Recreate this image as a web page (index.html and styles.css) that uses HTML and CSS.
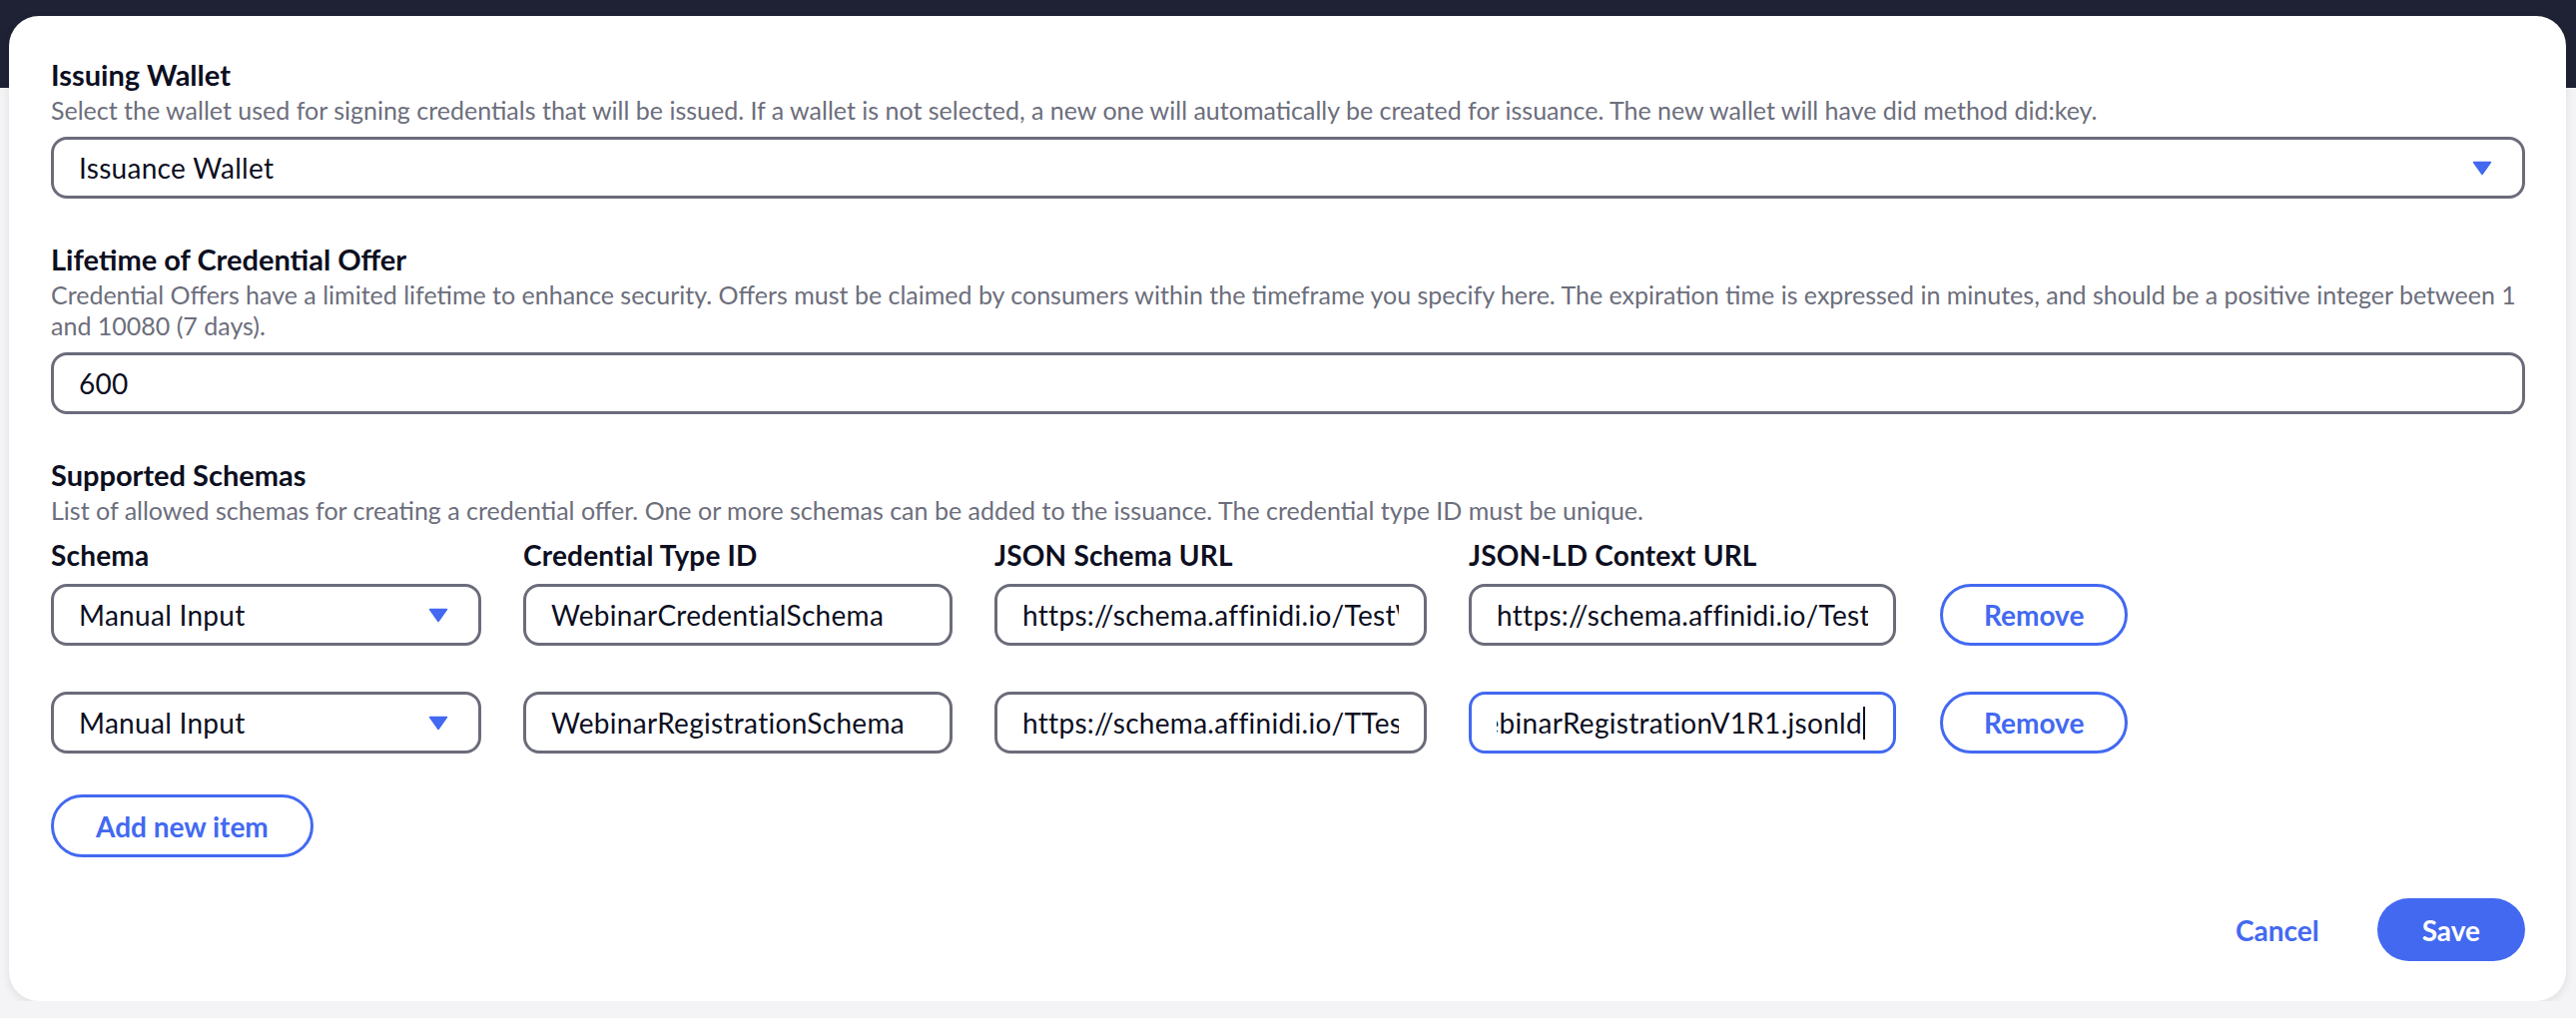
FILE: index.html
```html
<!DOCTYPE html>
<html lang="en">
<head>
<meta charset="utf-8">
<title>Issuance configuration</title>
<link rel="stylesheet" href="styles.css">
</head>
<body>
<div class="topbar"></div>
<main class="card">
  <section class="group">
    <h2 class="group-title">Issuing Wallet</h2>
    <p class="hint">Select the wallet used for signing credentials that will be issued. If a wallet is not selected, a new one will automatically be created for issuance. The new wallet will have did method did:key.</p>
    <div class="box select">
      <span class="box-text">Issuance Wallet</span>
      <svg class="tri" viewBox="0 0 20 15" aria-hidden="true"><polygon points="1.5,1.5 18.5,1.5 10,13.5"/></svg>
    </div>
  </section>

  <section class="group">
    <h2 class="group-title">Lifetime of Credential Offer</h2>
    <p class="hint">Credential Offers have a limited lifetime to enhance security. Offers must be claimed by consumers within the timeframe you specify here. The expiration time is expressed in minutes, and should be a positive integer between 1 and 10080 (7 days).</p>
    <input class="box field" type="text" value="600" readonly>
  </section>

  <section class="group">
    <h2 class="group-title">Supported Schemas</h2>
    <p class="hint">List of allowed schemas for creating a credential offer. One or more schemas can be added to the issuance. The credential type ID must be unique.</p>
    <div class="schema-head">
      <div class="col-label">Schema</div>
      <div class="col-label">Credential Type ID</div>
      <div class="col-label">JSON Schema URL</div>
      <div class="col-label">JSON-LD Context URL</div>
    </div>
    <div class="schema-rows">
      <div class="schema-row">
        <div class="box select">
          <span class="box-text">Manual Input</span>
          <svg class="tri" viewBox="0 0 20 15" aria-hidden="true"><polygon points="1.5,1.5 18.5,1.5 10,13.5"/></svg>
        </div>
        <input class="box field" type="text" value="WebinarCredentialSchema" readonly>
        <input class="box field" type="text" value="https://schema.affinidi.io/TestWebinarCredentialV1R0.json" readonly>
        <input class="box field" type="text" value="https://schema.affinidi.io/TestWebinarCredentialV1R0.jsonld" readonly>
        <button class="btn-outline">Remove</button>
      </div>
      <div class="schema-row">
        <div class="box select">
          <span class="box-text">Manual Input</span>
          <svg class="tri" viewBox="0 0 20 15" aria-hidden="true"><polygon points="1.5,1.5 18.5,1.5 10,13.5"/></svg>
        </div>
        <input class="box field" type="text" value="WebinarRegistrationSchema" readonly>
        <input class="box field" type="text" value="https://schema.affinidi.io/TTestWebinarRegistrationV1R1.json" readonly>
        <div class="box focused"><span class="box-text end"><span class="tail">https://schema.affinidi.io/TTestWebinarRegistrationV1R1.jsonld</span><i class="cursor"></i></span></div>
        <button class="btn-outline">Remove</button>
      </div>
    </div>
    <button class="btn-outline add">Add new item</button>
  </section>

  <footer class="actions">
    <button class="btn-text">Cancel</button>
    <button class="btn-primary">Save</button>
  </footer>
</main>
</body>
</html>
```
FILE: styles.css
```css
* { box-sizing: border-box; }

html, body {
  margin: 0;
  padding: 0;
}

body {
  background: #f4f4f6;
  font-family: "Lato", "Liberation Sans", sans-serif;
  color: #0d0f1f;
}

.topbar {
  height: 88px;
  background: #1f2135;
}

.card {
  margin: -72px 10px 0 9px;
  padding: 41px 41px 40px 42px;
  background: #ffffff;
  border-radius: 30px;
  box-shadow: 0 3px 10px rgba(20, 24, 40, 0.09);
}

.group + .group { margin-top: 43px; }

.group-title {
  margin: 0;
  font-size: 29px;
  line-height: 36px;
  font-weight: 700;
  color: #0d0f1f;
}

.hint {
  margin: 2px 0 11px;
  font-size: 25px;
  line-height: 31px;
  color: #6c6e7c;
}

.box {
  display: flex;
  align-items: center;
  width: 100%;
  height: 62px;
  margin: 0;
  border: 3px solid #6b6c7a;
  border-radius: 16px;
  background: #fff;
  padding: 0 25px;
  overflow: hidden;
  font-family: inherit;
  font-size: 28px;
  letter-spacing: 0.3px;
  color: #0d0f1f;
  min-width: 0;
  outline: none;
}

.box-text {
  white-space: nowrap;
  overflow: hidden;
  flex: 1 1 auto;
  min-width: 0;
}

.box-text.end {
  display: flex;
  justify-content: flex-end;
  align-items: center;
}

.tail { flex: none; }

.box.focused {
  border-color: #4369f1;
  padding-right: 28px;
}

.cursor {
  display: inline-block;
  flex: none;
  width: 2px;
  height: 33px;
  background: #0d0f1f;
  margin-left: 1px;
}

.select { justify-content: space-between; padding-right: 30px; }

.tri {
  width: 20px;
  height: 15px;
  flex: none;
  fill: #4369f1;
  stroke: #4369f1;
  stroke-width: 1.5;
  stroke-linejoin: round;
}

.schema-head,
.schema-row {
  display: grid;
  grid-template-columns: 431px 430px 433px 428px auto;
  column-gap: 42px;
  align-items: center;
}

.schema-head { margin-top: 9px; margin-bottom: 11px; }

.schema-head .col-label {
  font-size: 28px;
  line-height: 36px;
  font-weight: 700;
  letter-spacing: 0.2px;
}

.schema-rows {
  display: flex;
  flex-direction: column;
  gap: 46px;
}

.schema-row .btn-outline { justify-self: start; margin-left: 2px; }

button {
  font-family: inherit;
  font-size: 28px;
  font-weight: 700;
  cursor: pointer;
}

.btn-outline {
  height: 62px;
  padding: 0 41px;
  border: 3px solid #4369f1;
  border-radius: 999px;
  background: #fff;
  color: #4369f1;
}

.add {
  display: block;
  margin-top: 41px;
  height: 63px;
  padding: 0 42px;
}

.actions {
  margin-top: 41px;
  display: flex;
  justify-content: flex-end;
  align-items: center;
  gap: 28px;
}

.btn-text {
  height: 63px;
  padding: 0 30px;
  border: none;
  background: transparent;
  color: #4369f1;
}

.btn-primary {
  height: 63px;
  padding: 0 45px;
  border: none;
  border-radius: 999px;
  background: #4369f1;
  color: #fff;
}
```
